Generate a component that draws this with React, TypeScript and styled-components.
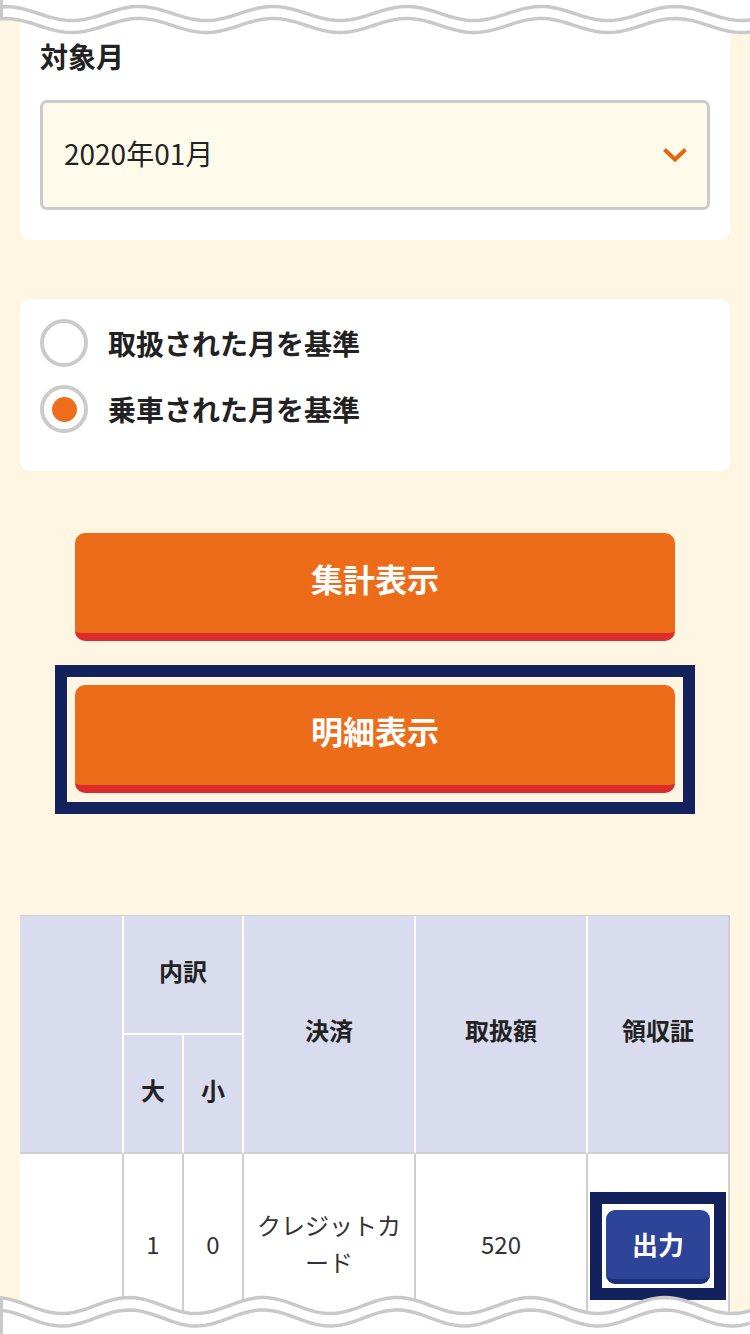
import React from "react";
import styled, { createGlobalStyle } from "styled-components";

const GlobalStyle = createGlobalStyle`
  html, body {
    margin: 0;
    padding: 0;
  }
  body {
    font-family: "Noto Sans CJK JP", "Noto Sans", sans-serif;
    color: #222;
  }
  * {
    box-sizing: border-box;
  }
`;

// --- Frame ---

const Screen = styled.div`
  position: relative;
  width: 750px;
  height: 1334px;
  overflow: hidden;
  background: #fef5e3;
`;

const Content = styled.main`
  display: flex;
  flex-direction: column;
  padding: 0 20px;
`;

const WaveSvg = styled.svg<{ $edge: "top" | "bottom" }>`
  position: absolute;
  left: 0;
  ${(p) => (p.$edge === "top" ? "top: 0;" : "bottom: 0;")}
  display: block;
  z-index: 5;
`;

// --- Cards ---

const Card = styled.section<{ $pad: string; $mt?: number }>`
  background: #fff;
  border-radius: 10px;
  padding: ${(p) => p.$pad};
  margin-top: ${(p) => p.$mt ?? 0}px;
`;

const FieldLabel = styled.h2`
  margin: 0 0 23px;
  font-size: 28px;
  line-height: 42px;
  font-weight: 700;
  color: #222;
`;

const SelectBox = styled.div`
  height: 110px;
  display: flex;
  align-items: center;
  justify-content: space-between;
  padding: 0 19px 4px 21px;
  background: #fffbea;
  border: 3px solid #cbcbcb;
  border-radius: 7px;
  font-size: 28px;
  color: #222;

  & svg {
    margin-top: 4px;
  }
`;

const RadioList = styled.div`
  display: flex;
  flex-direction: column;
  gap: 18px;
`;

const RadioRow = styled.label`
  display: flex;
  align-items: center;
  gap: 20px;
  height: 48px;
  font-size: 28px;
  font-weight: 700;
  color: #222;
`;

const RadioMark = styled.span<{ $checked?: boolean }>`
  width: 48px;
  height: 48px;
  border-radius: 50%;
  border: 4px solid #cbcbcb;
  background: #fff;
  display: flex;
  align-items: center;
  justify-content: center;
  flex-shrink: 0;

  &::after {
    content: "";
    width: 25px;
    height: 25px;
    border-radius: 50%;
    background: ${(p) => (p.$checked ? "#ed6d1c" : "transparent")};
  }
`;

// --- Buttons ---

const ButtonArea = styled.div`
  margin-top: 62px;
  display: flex;
  flex-direction: column;
  align-items: center;
  gap: 24px;
`;

const PrimaryButton = styled.button`
  width: 600px;
  height: 108px;
  border: none;
  border-bottom: 8px solid #dc2c2c;
  border-radius: 10px;
  background: #ec6c1a;
  color: #fff;
  font-family: "Noto Sans CJK JP", sans-serif;
  font-size: 32px;
  font-weight: 700;
  padding: 0 0 10px;
`;

const FocusFrame = styled.div<{ $pad: string; $fill?: string }>`
  border: 12px solid #13215c;
  padding: ${(p) => p.$pad};
  background: ${(p) => p.$fill ?? "transparent"};
`;

const OutputButton = styled.button`
  width: 104px;
  height: 74px;
  border: none;
  border-bottom: 5px solid #1d2e7b;
  border-radius: 9px;
  background: #2d4499;
  color: #fff;
  font-family: "Noto Sans CJK JP", sans-serif;
  font-size: 26px;
  font-weight: 700;
  padding: 0 0 3px;
`;

// --- Table ---

const Table = styled.div`
  margin-top: 101px;
  display: grid;
  grid-template-columns: 102px 60px 60px 172px 172px 142px;
  grid-template-rows: 119px 119px 184px;
  border-top: 1px solid #cfcfcf;
  border-right: 2px solid #cfcfcf;
`;

const HeadCell = styled.div<{ $area: string; $first?: boolean; $split?: boolean }>`
  grid-area: ${(p) => p.$area};
  background: #d8dcee;
  display: flex;
  align-items: center;
  justify-content: center;
  padding-bottom: 9px;
  font-size: 24px;
  font-weight: 700;
  color: #222;
  border-left: ${(p) => (p.$first ? "none" : "2px solid #fff")};
  border-bottom: 2px solid ${(p) => (p.$split ? "#fff" : "#cfcfcf")};
`;

const BodyCell = styled.div<{ $first?: boolean }>`
  background: #fff;
  display: flex;
  align-items: center;
  justify-content: center;
  padding: 0 12px 6px;
  text-align: center;
  font-size: 24px;
  line-height: 37px;
  color: #333;
  border-left: ${(p) => (p.$first ? "none" : "2px solid #cfcfcf")};
`;

const ActionCell = styled(BodyCell)`
  padding: 0;
`;

// --- Drawings ---

const wave = (cy: number, amp: number, phase: number) => {
  const pts: string[] = [];
  for (let x = 0; x <= 750; x += 5) {
    const y = cy - amp * Math.cos((2 * Math.PI * (x - phase)) / 134);
    pts.push(`${x},${y.toFixed(2)}`);
  }
  return pts;
};

const TopWave = () => {
  const a = wave(13.5, 7, 139);
  const b = wave(25.5, 7, 139);
  const fill = `M0,0 L750,0 L${[...b].reverse().join(" L")} Z`;
  return (
    <WaveSvg $edge="top" width="750" height="40" viewBox="0 0 750 40">
      <path d={fill} fill="#fff" />
      <polyline points={a.join(" ")} fill="none" stroke="#c9c9c9" strokeWidth="3.5" />
      <polyline points={b.join(" ")} fill="none" stroke="#c9c9c9" strokeWidth="3.5" />
      <line x1="1.5" y1="0" x2="1.5" y2="19" stroke="#c9c9c9" strokeWidth="3" />
    </WaveSvg>
  );
};

const BottomWave = () => {
  const a = wave(21.5, 8, 129);
  const b = wave(34, 8, 129);
  const fill = `M${a.join(" L")} L750,50 L0,50 Z`;
  return (
    <WaveSvg $edge="bottom" width="750" height="50" viewBox="0 0 750 50">
      <path d={fill} fill="#fff" />
      <polyline points={a.join(" ")} fill="none" stroke="#c9c9c9" strokeWidth="3.5" />
      <polyline points={b.join(" ")} fill="none" stroke="#c9c9c9" strokeWidth="3.5" />
      <line x1="1.5" y1="14" x2="1.5" y2="50" stroke="#c9c9c9" strokeWidth="3" />
    </WaveSvg>
  );
};

const Chevron = () => (
  <svg width="26" height="16" viewBox="0 0 26 16">
    <polyline points="2.5,2.5 13,12.5 23.5,2.5" fill="none" stroke="#e8650f" strokeWidth="4" />
  </svg>
);

const App: React.FC = () => (
  <Screen>
    <GlobalStyle />
    <Content>
      <Card $pad="35px 20px 30px">
        <FieldLabel>対象月</FieldLabel>
        <SelectBox role="combobox">
          <span>2020年01月</span>
          <Chevron />
        </SelectBox>
      </Card>

      <Card $pad="20px 20px 38px" $mt={59}>
        <RadioList>
          <RadioRow>
            <RadioMark />
            取扱された月を基準
          </RadioRow>
          <RadioRow>
            <RadioMark $checked />
            乗車された月を基準
          </RadioRow>
        </RadioList>
      </Card>

      <ButtonArea>
        <PrimaryButton>集計表示</PrimaryButton>
        <FocusFrame $pad="8px 8px 9px">
          <PrimaryButton>明細表示</PrimaryButton>
        </FocusFrame>
      </ButtonArea>

      <Table>
        <HeadCell $area="1 / 1 / 3 / 2" $first />
        <HeadCell $area="1 / 2 / 2 / 4" $split>内訳</HeadCell>
        <HeadCell $area="2 / 2 / 3 / 3">大</HeadCell>
        <HeadCell $area="2 / 3 / 3 / 4">小</HeadCell>
        <HeadCell $area="1 / 4 / 3 / 5">決済</HeadCell>
        <HeadCell $area="1 / 5 / 3 / 6">取扱額</HeadCell>
        <HeadCell $area="1 / 6 / 3 / 7">領収証</HeadCell>

        <BodyCell $first />
        <BodyCell>1</BodyCell>
        <BodyCell>0</BodyCell>
        <BodyCell>クレジットカード</BodyCell>
        <BodyCell>520</BodyCell>
        <ActionCell>
          <FocusFrame $pad="6px 4px 4px" $fill="#fff">
            <OutputButton>出力</OutputButton>
          </FocusFrame>
        </ActionCell>
      </Table>
    </Content>
    <TopWave />
    <BottomWave />
  </Screen>
);

export default App;
